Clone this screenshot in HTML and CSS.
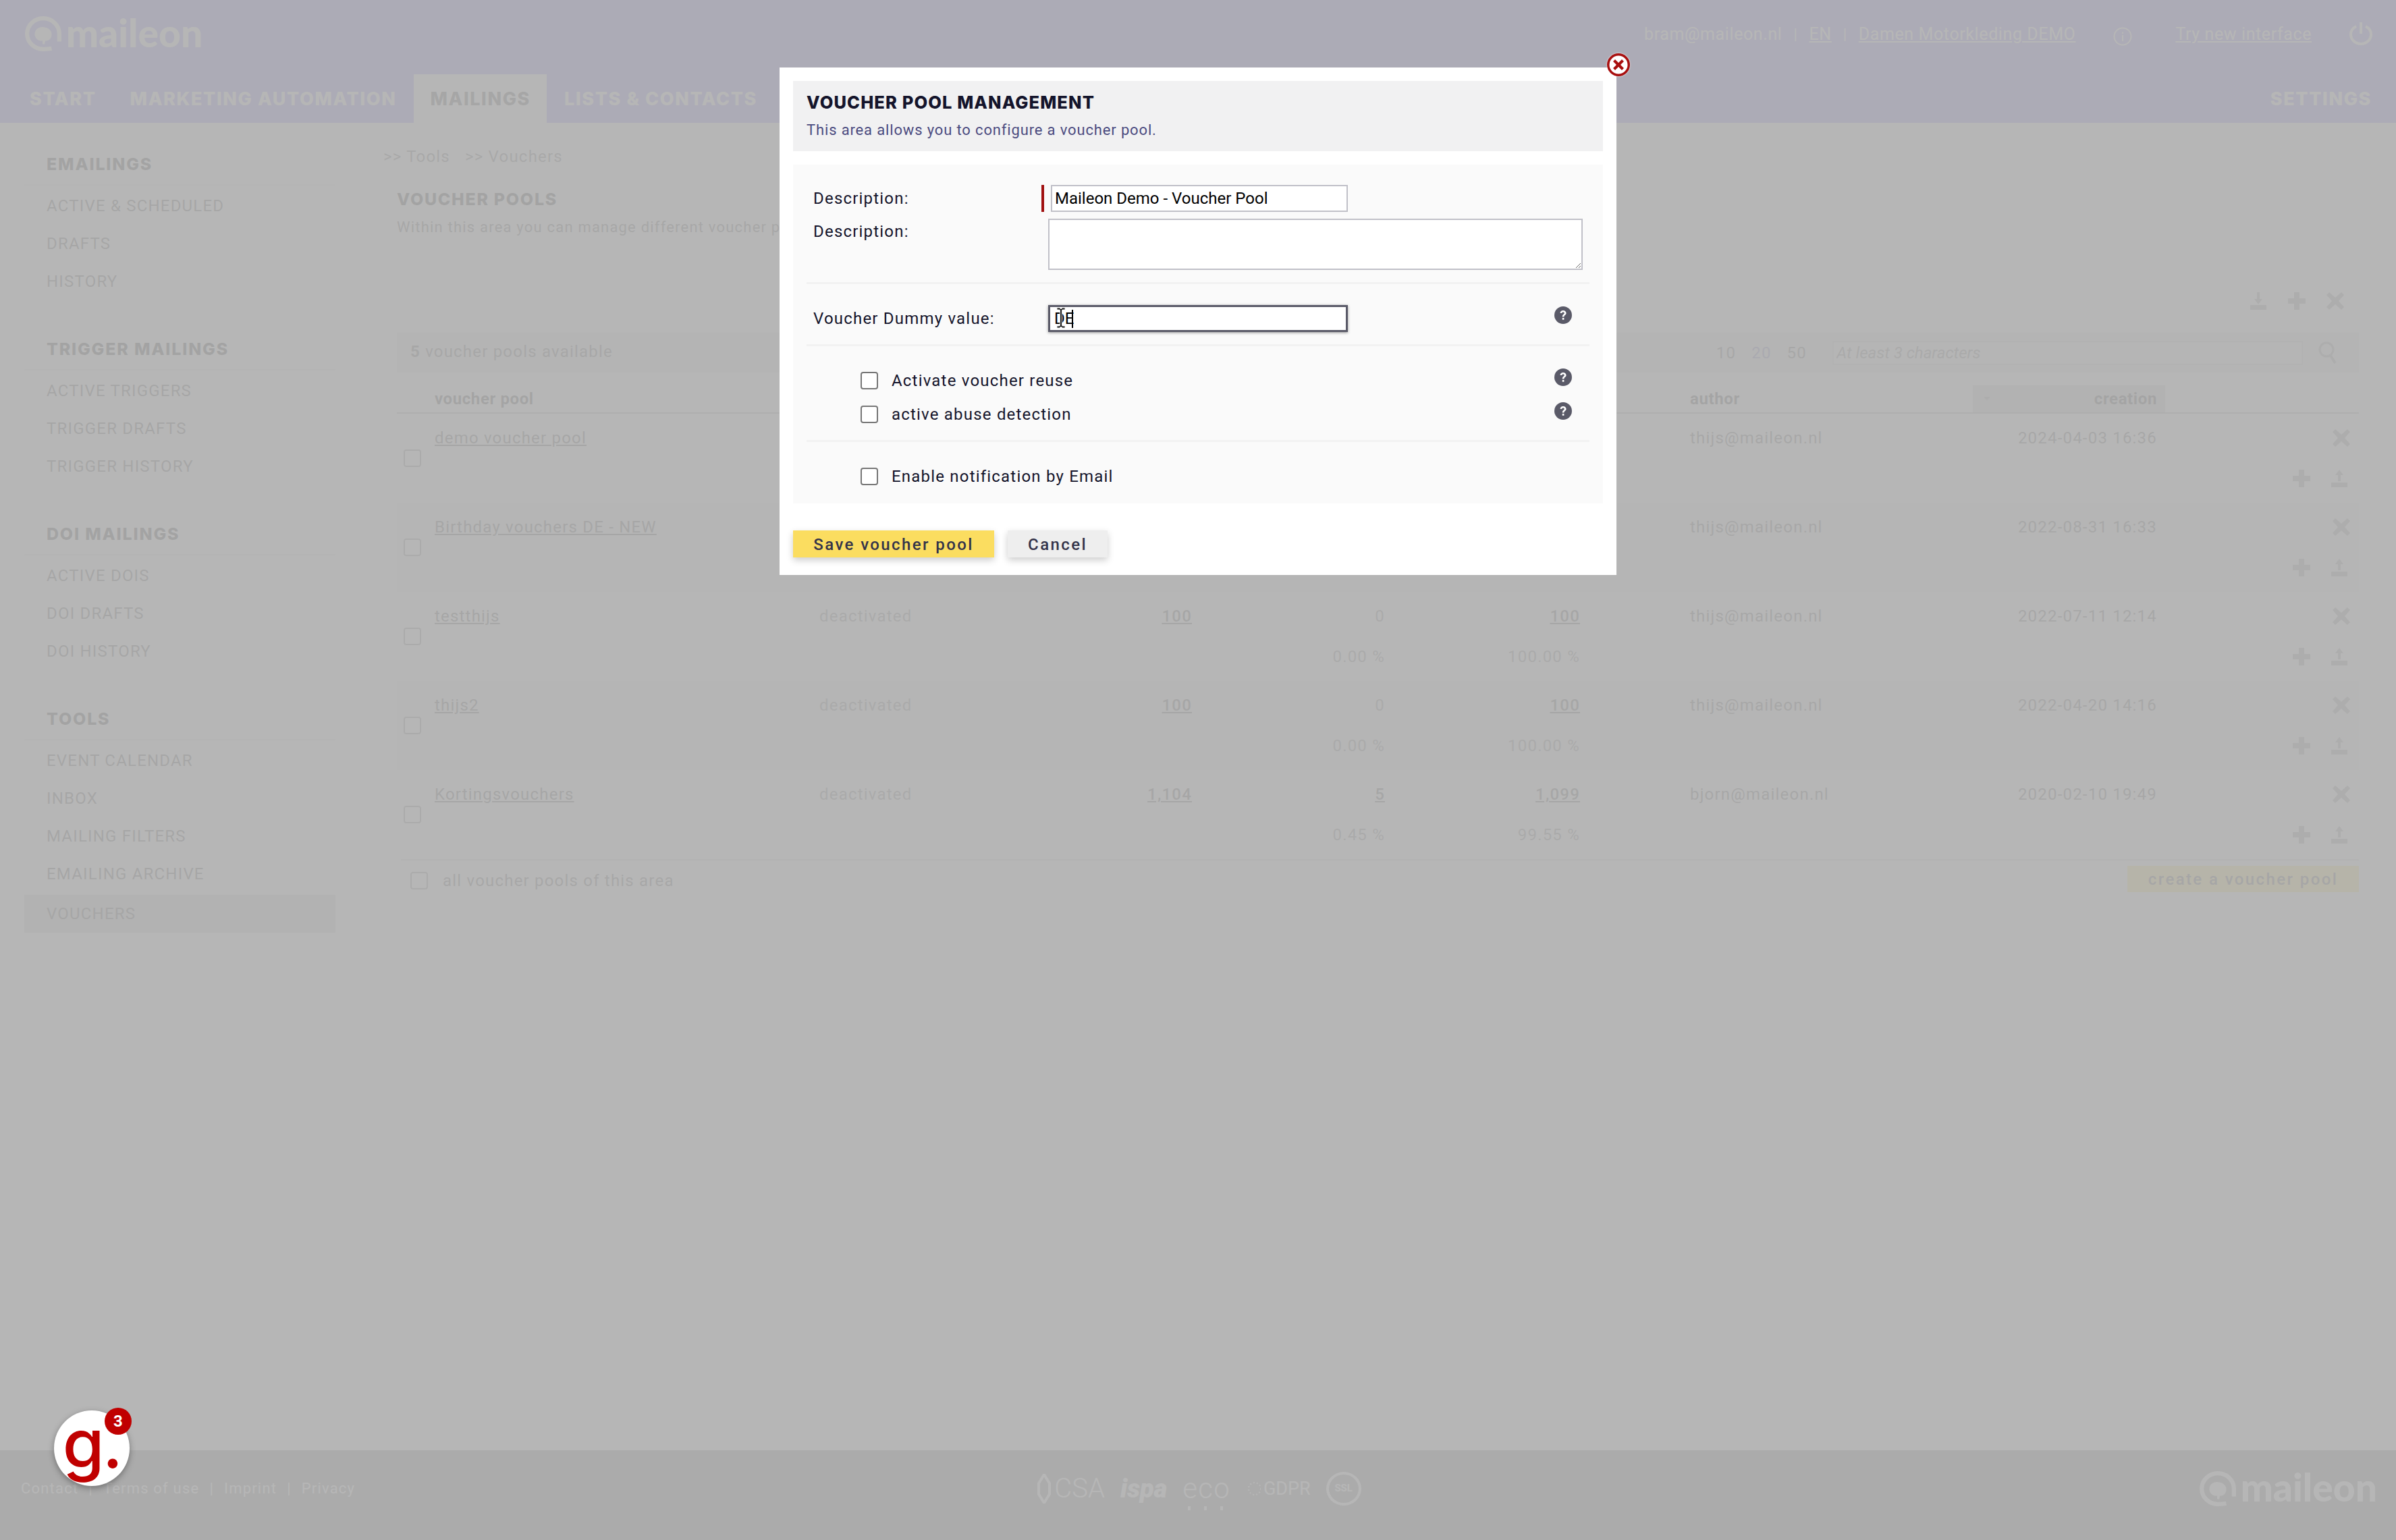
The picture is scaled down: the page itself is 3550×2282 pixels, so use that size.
FILE: index.html
```html
<!DOCTYPE html>
<html lang="en">
<head>
    <meta charset="UTF-8">
    <title>Maileon - Voucher pools</title>
    <link rel="stylesheet" href="styles.css">
</head>
<body>
    <svg class="defs" width="0" height="0">
        <symbol id="at" viewBox="0 0 54 50">
            <path d="M39 46 C34 47 31 47 27 47 C14 47 4 37 4 25 C4 13 14 3 27 3 C40 3 50 13 50 25 L50 36" fill="none" stroke="currentColor" stroke-width="6"/>
            <path d="M15 24 C16 17 24 14 30 16 C36 17 40 22 39 27 C39 33 33 36 30 35 L29 40 L26 40 L26 35 C20 36 14 31 15 24 Z" fill="currentColor"/>
        </symbol>
        <symbol id="ico-x" viewBox="0 0 28 28">
            <path d="M1 5 L5 1 L14 9 L23 1 L27 5 L19 14 L27 23 L23 27 L14 19 L5 27 L1 23 L9 14 Z" fill="currentColor"/>
        </symbol>
        <symbol id="ico-plus" viewBox="0 0 28 28">
            <path d="M10 1 H18 V10 H27 V18 H18 V27 H10 V18 H1 V10 H10 Z" fill="currentColor"/>
        </symbol>
        <symbol id="ico-up" viewBox="0 0 28 28">
            <path d="M14 1 L20 9 H16 V18 H12 V9 H8 Z" fill="currentColor"/>
            <rect x="2" y="20" width="24" height="7" fill="currentColor"/>
        </symbol>
        <symbol id="ico-down" viewBox="0 0 28 28">
            <path d="M14 19 L20 11 H16 V1 H12 V11 H8 Z" fill="currentColor"/>
            <rect x="2" y="20" width="24" height="7" fill="currentColor"/>
        </symbol>
        <symbol id="ico-help" viewBox="0 0 26 26">
            <circle cx="13" cy="13" r="13" fill="#5a5a68"/>
            <path d="M8.6 10 C8.6 7.2 10.8 6 13 6 C15.7 6 17.6 7.7 17.6 10 C17.6 12.8 14.4 12.8 14.4 15.6 H11.8 C11.8 11.6 14.8 11.8 14.8 10 C14.8 9 14 8.4 13 8.4 C12 8.4 11.2 9 11.1 10 Z" fill="#fff"/>
            <rect x="11.8" y="17" width="2.6" height="2.8" fill="#fff"/>
        </symbol>
    </svg>

    <header class="top">
        <div class="top-bar">
            <a class="logo"><svg class="logo-at"><use href="#at"/></svg><span>maileon</span></a>
            <div class="top-links">
                <span>bram@maileon.nl</span>
                <span class="sep">|</span>
                <a>EN</a>
                <span class="sep">|</span>
                <a>Damen Motorkleding DEMO</a>
                <svg class="ico-info" viewBox="0 0 28 28">
                    <circle cx="14" cy="14" r="12.5" fill="none" stroke="currentColor" stroke-width="2"/>
                    <rect x="13" y="12" width="2" height="9" fill="currentColor"/>
                    <rect x="13" y="7.5" width="2" height="2.5" fill="currentColor"/>
                </svg>
                <a class="try-new">Try new interface</a>
                <svg class="ico-power" viewBox="0 0 34 34">
                    <path d="M10 6 C4 9 2 14 2 18 C2 26 9 32 17 32 C25 32 32 26 32 18 C32 14 30 9 24 6" fill="none" stroke="currentColor" stroke-width="4"/>
                    <rect x="15" y="0" width="4" height="17" fill="currentColor"/>
                </svg>
            </div>
        </div>
        <nav class="main-nav">
            <a>START</a>
            <a>MARKETING AUTOMATION</a>
            <a class="active">MAILINGS</a>
            <a>LISTS &amp; CONTACTS</a>
            <a class="nav-right">SETTINGS</a>
        </nav>
    </header>

    <div class="layout">
        <aside class="sidebar">
            <section>
                <h3>EMAILINGS</h3>
                <ul>
                    <li>ACTIVE &amp; SCHEDULED</li>
                    <li>DRAFTS</li>
                    <li>HISTORY</li>
                </ul>
            </section>
            <section>
                <h3>TRIGGER MAILINGS</h3>
                <ul>
                    <li>ACTIVE TRIGGERS</li>
                    <li>TRIGGER DRAFTS</li>
                    <li>TRIGGER HISTORY</li>
                </ul>
            </section>
            <section>
                <h3>DOI MAILINGS</h3>
                <ul>
                    <li>ACTIVE DOIS</li>
                    <li>DOI DRAFTS</li>
                    <li>DOI HISTORY</li>
                </ul>
            </section>
            <section>
                <h3>TOOLS</h3>
                <ul>
                    <li>EVENT CALENDAR</li>
                    <li>INBOX</li>
                    <li>MAILING FILTERS</li>
                    <li>EMAILING ARCHIVE</li>
                    <li class="active">VOUCHERS</li>
                </ul>
            </section>
        </aside>

        <main class="content">
            <div class="crumbs"><span>&gt;&gt; Tools</span><span>&gt;&gt; Vouchers</span></div>
            <div class="intro">
                <h2>VOUCHER POOLS</h2>
                <p>Within this area you can manage different voucher pools.</p>
            </div>
            <div class="tool-icons">
                <svg class="ico"><use href="#ico-down"/></svg>
                <svg class="ico"><use href="#ico-plus"/></svg>
                <svg class="ico"><use href="#ico-x"/></svg>
            </div>

            <div class="pools">
                <div class="pools-bar">
                    <span class="pools-count"><b>5</b> voucher pools available</span>
                    <div class="pools-tools">
                        <span class="page-size">10</span>
                        <span class="page-size current">20</span>
                        <span class="page-size">50</span>
                        <input class="search" type="text" placeholder="At least 3 characters">
                        <svg class="ico-search" viewBox="0 0 28 34">
                            <circle cx="13" cy="12" r="10" fill="none" stroke="currentColor" stroke-width="3"/>
                            <path d="M19 21 L26 32" stroke="currentColor" stroke-width="4"/>
                        </svg>
                    </div>
                </div>

                <div class="pool-grid pool-head">
                    <span class="col-name">voucher pool</span>
                    <span class="col-author">author</span>
                    <span class="col-date sorted"><i class="sort-mark"></i>creation</span>
                </div>

                <div class="pool-grid pool-row">
                    <input class="check row-check" type="checkbox">
                    <a class="col-name">demo voucher pool</a>
                    <span class="col-author">thijs@maileon.nl</span>
                    <span class="col-date">2024-04-03 16:36</span>
                    <span class="row-x"><svg class="ico"><use href="#ico-x"/></svg></span>
                    <span class="row-actions"><svg class="ico"><use href="#ico-plus"/></svg><svg class="ico"><use href="#ico-up"/></svg></span>
                </div>
                <div class="pool-grid pool-row alt">
                    <input class="check row-check" type="checkbox">
                    <a class="col-name">Birthday vouchers DE - NEW</a>
                    <span class="col-author">thijs@maileon.nl</span>
                    <span class="col-date">2022-08-31 16:33</span>
                    <span class="row-x"><svg class="ico"><use href="#ico-x"/></svg></span>
                    <span class="row-actions"><svg class="ico"><use href="#ico-plus"/></svg><svg class="ico"><use href="#ico-up"/></svg></span>
                </div>
                <div class="pool-grid pool-row">
                    <input class="check row-check" type="checkbox">
                    <a class="col-name">testthijs</a>
                    <span class="col-status">deactivated</span>
                    <a class="num col-total">100</a>
                    <span class="num col-used">0</span>
                    <a class="num col-free">100</a>
                    <span class="col-author">thijs@maileon.nl</span>
                    <span class="col-date">2022-07-11 12:14</span>
                    <span class="row-x"><svg class="ico"><use href="#ico-x"/></svg></span>
                    <span class="pct col-used">0.00 %</span>
                    <span class="pct col-free">100.00 %</span>
                    <span class="row-actions"><svg class="ico"><use href="#ico-plus"/></svg><svg class="ico"><use href="#ico-up"/></svg></span>
                </div>
                <div class="pool-grid pool-row alt">
                    <input class="check row-check" type="checkbox">
                    <a class="col-name">thijs2</a>
                    <span class="col-status">deactivated</span>
                    <a class="num col-total">100</a>
                    <span class="num col-used">0</span>
                    <a class="num col-free">100</a>
                    <span class="col-author">thijs@maileon.nl</span>
                    <span class="col-date">2022-04-20 14:16</span>
                    <span class="row-x"><svg class="ico"><use href="#ico-x"/></svg></span>
                    <span class="pct col-used">0.00 %</span>
                    <span class="pct col-free">100.00 %</span>
                    <span class="row-actions"><svg class="ico"><use href="#ico-plus"/></svg><svg class="ico"><use href="#ico-up"/></svg></span>
                </div>
                <div class="pool-grid pool-row">
                    <input class="check row-check" type="checkbox">
                    <a class="col-name">Kortingsvouchers</a>
                    <span class="col-status">deactivated</span>
                    <a class="num col-total">1,104</a>
                    <a class="num col-used">5</a>
                    <a class="num col-free">1,099</a>
                    <span class="col-author">bjorn@maileon.nl</span>
                    <span class="col-date">2020-02-10 19:49</span>
                    <span class="row-x"><svg class="ico"><use href="#ico-x"/></svg></span>
                    <span class="pct col-used">0.45 %</span>
                    <span class="pct col-free">99.55 %</span>
                    <span class="row-actions"><svg class="ico"><use href="#ico-plus"/></svg><svg class="ico"><use href="#ico-up"/></svg></span>
                </div>

                <div class="pools-foot">
                    <label class="select-all"><input class="check" type="checkbox"> all voucher pools of this area</label>
                    <a class="btn-create">create a voucher pool</a>
                </div>
            </div>
        </main>
    </div>

    <footer class="foot">
        <div class="foot-links">
            <span>Contact</span><span>|</span><span>Terms of use</span><span>|</span><span>Imprint</span><span>|</span><span>Privacy</span>
        </div>
        <div class="foot-seals">
            <span class="seal-csa"><svg viewBox="0 0 20 44"><path d="M10 1 L18 14 V30 L10 43 L2 30 V14 Z" fill="none" stroke="currentColor" stroke-width="4"/></svg>CSA</span>
            <span class="seal-ispa">ispa</span>
            <span class="seal-eco">eco</span>
            <span class="seal-gdpr"><svg viewBox="0 0 20 44"><circle cx="12" cy="22" r="9" fill="none" stroke="currentColor" stroke-width="2" stroke-dasharray="2 3"/></svg>GDPR</span>
            <span class="seal-ssl">SSL</span>
        </div>
        <a class="logo foot-logo"><svg class="logo-at"><use href="#at"/></svg><span>maileon</span></a>
    </footer>

    <div class="overlay"></div>

    <div class="dialog">
        <svg class="dialog-close" viewBox="0 0 36 36">
            <circle cx="18" cy="18" r="17" fill="#a80f0f"/>
            <circle cx="18" cy="18" r="13.5" fill="#fff"/>
            <path d="M10 13 L13 10 L18 15 L23 10 L26 13 L21 18 L26 23 L23 26 L18 21 L13 26 L10 23 L15 18 Z" fill="#a80f0f"/>
        </svg>
        <div class="dialog-head">
            <h2>VOUCHER POOL MANAGEMENT</h2>
            <p>This area allows you to configure a voucher pool.</p>
        </div>
        <form class="dialog-form">
            <div class="form-section">
                <div class="form-row">
                    <label>Description:</label>
                    <span class="required"><input class="text-input" type="text" value="Maileon Demo - Voucher Pool"></span>
                </div>
                <div class="form-row row-text">
                    <label>Description:</label>
                    <textarea class="text-area"></textarea>
                </div>
            </div>
            <div class="form-section sec-dummy">
                <div class="form-row">
                    <label>Voucher Dummy value:</label>
                    <span class="focus-field">
                        <input class="text-input focused" type="text" value="DE">
                        <i class="caret"></i>
                        <svg class="ibeam" viewBox="0 0 14 32">
                            <path d="M1 1 H5 L7 3 L9 1 H13 V4 H9 L8.5 5 V27 L9 28 H13 V31 H9 L7 29 L5 31 H1 V28 H5 L5.5 27 V5 L5 4 H1 Z" fill="#222" stroke="#fff" stroke-width="0.8"/>
                        </svg>
                    </span>
                    <svg class="help"><use href="#ico-help"/></svg>
                </div>
            </div>
            <div class="form-section sec-checks">
                <div class="check-row">
                    <input class="check" type="checkbox"><label>Activate voucher reuse</label>
                    <svg class="help"><use href="#ico-help"/></svg>
                </div>
                <div class="check-row">
                    <input class="check" type="checkbox"><label>active abuse detection</label>
                    <svg class="help"><use href="#ico-help"/></svg>
                </div>
            </div>
            <div class="form-section sec-checks last">
                <div class="check-row">
                    <input class="check" type="checkbox"><label>Enable notification by Email</label>
                </div>
            </div>
        </form>
        <div class="dialog-buttons">
            <button class="btn btn-save" type="button">Save voucher pool</button>
            <button class="btn btn-cancel" type="button">Cancel</button>
        </div>
    </div>

    <div class="help-widget">
        <span class="help-g">g.</span>
        <span class="help-badge">3</span>
    </div>
</body>
</html>
```

FILE: styles.css
```css
* {
    box-sizing: border-box;
}
html, body {
    margin: 0;
    padding: 0;
}
body {
    position: relative;
    width: 3550px;
    height: 2282px;
    overflow: hidden;
    display: flex;
    flex-direction: column;
    background-color: #fff;
    color: #333;
    font-family: Roboto, 'Liberation Sans', sans-serif;
    font-size: 24px;
    letter-spacing: 1.2px;
}
.defs {
    position: absolute;
}
a {
    text-decoration: underline;
}

/* header */
.top {
    height: 182px;
    flex: none;
    background-color: #7e72fb;
    color: #fff;
}
.top-bar {
    height: 110px;
    display: flex;
    justify-content: space-between;
    padding: 24px 35px 0 36px;
}
.logo {
    display: flex;
    align-items: center;
    height: 52px;
    text-decoration: none;
    color: #fff;
    font-family: Lato, sans-serif;
    font-weight: 900;
    font-size: 57px;
    letter-spacing: 0;
}
.logo span {
    margin-top: -5px;
}
.logo-at {
    width: 56px;
    height: 52px;
    margin-right: 6px;
}
.top-links {
    display: flex;
    align-items: center;
    height: 52px;
    font-size: 25px;
    letter-spacing: 0.6px;
}
.top-links .sep {
    margin: 0 17px;
    font-size: 22px;
}
.ico-info {
    width: 28px;
    height: 28px;
    margin: 8px 64px 0 56px;
}
.try-new {
    margin-right: 56px;
}
.ico-power {
    width: 34px;
    height: 34px;
}
.main-nav {
    display: flex;
    height: 72px;
    gap: 2px;
    padding: 0 12px 0 20px;
    font-family: Inter, Lato, sans-serif;
    font-weight: 800;
    font-size: 27px;
    letter-spacing: 1.6px;
}
.main-nav a {
    display: flex;
    align-items: center;
    padding: 0 24px;
    text-decoration: none;
}
.main-nav a.active {
    background-color: #fff;
    color: #333;
}
.main-nav .nav-right {
    margin-left: auto;
}

/* sidebar */
.layout {
    display: flex;
    flex: 1;
}
.sidebar {
    width: 461px;
    margin: 41px 0 0 36px;
    flex: none;
}
.sidebar section {
    margin-bottom: 52px;
}
.sidebar h3 {
    margin: 0;
    height: 52px;
    padding: 0 0 10px 33px;
    line-height: 40px;
    border-bottom: 2px solid #ddd;
    font-family: Inter, Lato, sans-serif;
    font-weight: 800;
    font-size: 25px;
    letter-spacing: 1.8px;
    color: #111;
}
.sidebar ul {
    list-style: none;
    margin: 0;
    padding: 2px 0 0;
}
.sidebar li {
    height: 56px;
    line-height: 56px;
    padding-left: 33px;
    color: #333;
}
.sidebar li.active {
    margin-top: 3px;
    background-color: #c4c4c4;
}

/* main part */
.content {
    flex: 1;
    margin: 30px 55px 0 71px;
}
.crumbs {
    display: flex;
    gap: 22px;
    height: 40px;
    line-height: 40px;
    color: #555;
}
.intro {
    height: 102px;
    margin-top: 11px;
    padding: 12px 0 0 20px;
    background-color: #f8f8f8;
}
.intro h2 {
    margin: 0;
    line-height: 40px;
    font-family: Inter, Lato, sans-serif;
    font-weight: 800;
    font-size: 25px;
    letter-spacing: 1.7px;
    color: #111;
}
.intro p {
    margin: 5px 0 0;
    line-height: 34px;
    font-size: 22px;
    color: #444;
}
.tool-icons {
    display: flex;
    justify-content: flex-end;
    gap: 29px;
    height: 30px;
    margin: 67px 21px 0 0;
    color: #8a8a8a;
}
.ico {
    width: 28px;
    height: 28px;
}
.pools {
    margin: 31px 0 0 20px;
}
.pools-bar {
    display: flex;
    justify-content: space-between;
    align-items: center;
    height: 59px;
    padding: 0 33px 0 20px;
    background-color: #e0e0e0;
    color: #444;
}
.pools-count {
    margin-bottom: 4px;
}
.pools-tools {
    display: flex;
    align-items: center;
}
.page-size {
    margin-right: 23px;
    color: #444;
}
.page-size.current {
    color: #6464b4;
}
.search {
    width: 697px;
    height: 36px;
    margin-left: 15px;
    padding: 0 4px;
    border: 2px solid #ccc;
    background-color: #eee;
    font-family: Roboto, sans-serif;
    font-size: 24px;
}
.search::placeholder {
    font-style: italic;
    color: #666;
}
.ico-search {
    width: 28px;
    height: 34px;
    margin-left: 22px;
    color: #8a8a8a;
}
.pool-grid {
    display: grid;
    grid-template-columns: 56px 570px 252px 300px 286px 289px 163px 446px 246px 299px;
}
.pool-head {
    height: 42px;
    margin-top: 19px;
    border-bottom: 2px solid #999;
    line-height: 40px;
    font-weight: 700;
    color: #222;
    letter-spacing: 0.6px;
}
.col-name {
    grid-column: 2;
}
.col-author {
    grid-column: 8;
}
.pool-head > span {
    grid-row: 1;
}
.pool-head .sorted {
    position: relative;
    grid-column: 9;
    margin: 0 -12px 0 -27px;
    padding-right: 12px;
    text-align: right;
    background-color: #c9c9c9;
}
.sort-mark {
    position: absolute;
    left: 16px;
    top: 17px;
    border: 5px solid transparent;
    border-top-color: #888;
}
.pool-row {
    height: 132px;
    grid-template-rows: 60px 60px;
    padding: 6px 0;
    line-height: 60px;
    color: #444;
}
.pool-row.alt {
    background-color: #eaeaea;
}
.pool-row .row-check {
    grid-column: 1;
    grid-row: 1 / 3;
    align-self: center;
    justify-self: start;
    margin-left: 10px;
}
.pool-row .col-name {
    grid-row: 1;
    color: #333;
}
.col-status {
    grid-column: 3;
    grid-row: 1;
    color: #666;
}
.col-total {
    grid-column: 4;
}
.col-used {
    grid-column: 5;
}
.col-free {
    grid-column: 6;
}
.num {
    grid-row: 1;
    justify-self: end;
    color: #666;
}
a.num {
    color: #333;
    font-weight: 500;
}
.pool-row .col-author {
    grid-row: 1;
}
.pool-row .col-date {
    grid-column: 9;
    grid-row: 1;
    text-align: right;
}
.row-x {
    grid-column: 10;
    grid-row: 1;
    display: flex;
    justify-content: flex-end;
    align-items: center;
    padding-right: 12px;
    color: #8a8a8a;
}
.row-actions {
    grid-column: 10;
    grid-row: 2;
    display: flex;
    justify-content: flex-end;
    align-items: center;
    gap: 28px;
    padding-right: 15px;
    color: #8a8a8a;
}
.pct {
    grid-row: 2;
    text-align: right;
    color: #666;
}
.pools-foot {
    display: flex;
    justify-content: space-between;
    align-items: flex-start;
    margin-left: 6px;
    padding-top: 8px;
    border-top: 2px solid #ccc;
}
.select-all {
    display: flex;
    align-items: center;
    gap: 22px;
    margin: 9px 0 0 14px;
    color: #444;
    line-height: 26px;
}
.btn-create {
    height: 39px;
    width: 343px;
    padding-top: 2px;
    line-height: 37px;
    text-align: center;
    text-decoration: none;
    background-color: #fddc5c;
    color: #333;
    font-weight: 500;
    letter-spacing: 2.4px;
}

/* footer */
.foot {
    flex: none;
    display: grid;
    grid-template-columns: 1fr auto 1fr;
    align-items: center;
    height: 133px;
    padding: 0 28px 20px 31px;
    background-color: #727272;
    color: #fff;
}
.foot-links {
    display: flex;
    gap: 15px;
    font-size: 22px;
}
.foot-seals {
    display: flex;
    align-items: center;
    gap: 23px;
}
.foot-seals svg {
    width: 22px;
    height: 44px;
}
.seal-csa, .seal-gdpr {
    display: flex;
    align-items: center;
    gap: 4px;
}
.seal-csa {
    font-size: 40px;
    font-weight: 300;
    letter-spacing: 0;
}
.seal-ispa {
    font-size: 38px;
    font-weight: 900;
    font-style: italic;
    letter-spacing: 0;
}
.seal-eco {
    position: relative;
    font-size: 42px;
    font-weight: 300;
}
.seal-eco::after {
    content: "";
    position: absolute;
    left: 8px;
    bottom: -8px;
    width: 4px;
    height: 6px;
    background-color: #fff;
    box-shadow: 24px 0 #fff, 48px 0 #fff;
}
.seal-gdpr {
    font-size: 27px;
    letter-spacing: 0;
}
.seal-ssl {
    width: 52px;
    height: 50px;
    line-height: 40px;
    border: 4px solid #fff;
    border-radius: 50%;
    text-align: center;
    font-size: 15px;
    letter-spacing: 0;
    font-weight: 700;
}
.foot-logo {
    justify-self: end;
}

/* overlay and dialog */
.overlay {
    position: absolute;
    inset: 0;
    background-color: rgba(176, 176, 176, 0.92);
}
.dialog {
    position: absolute;
    left: 1155px;
    top: 100px;
    width: 1240px;
    height: 752px;
    padding: 20px;
    background-color: #fff;
    color: #14142b;
}
.dialog-close {
    position: absolute;
    right: -21px;
    top: -22px;
    width: 36px;
    height: 36px;
    filter: drop-shadow(0 0 1px #fff);
}
.dialog-head {
    height: 104px;
    padding: 15px 20px 0;
    background-color: #f1f1f2;
}
.dialog-head h2 {
    margin: 0;
    line-height: 34px;
    font-family: Inter, Lato, sans-serif;
    font-weight: 800;
    font-size: 25.5px;
    letter-spacing: 1.1px;
    color: #14142b;
}
.dialog-head p {
    margin: 7px 0 0;
    line-height: 34px;
    font-size: 22px;
    letter-spacing: 0.85px;
    color: #4b4b80;
}
.dialog-form {
    height: 502px;
    margin-top: 20px;
    padding: 0 20px;
    background-color: #fafafa;
}
.form-section {
    padding: 30px 0 18px 10px;
    border-bottom: 3px solid #f2f2f2;
}
.sec-dummy {
    padding-top: 31px;
}
.sec-checks {
    padding: 26px 0 13px 80px;
}
.sec-checks.last {
    border-bottom: 0;
}
.form-row {
    display: flex;
    align-items: center;
}
.form-row label {
    width: 348px;
    flex: none;
}
.row-text {
    align-items: flex-start;
    margin-top: 10px;
}
.row-text label {
    padding-top: 5px;
}
.required {
    display: block;
    margin-left: -10px;
    padding-left: 10px;
    border-left: 4px solid #a01010;
    height: 40px;
}
.text-input {
    display: block;
    width: 440px;
    height: 40px;
    padding: 0 4px;
    border: 2px solid #c0c0c8;
    border-radius: 0;
    outline: none;
    background-color: #fff;
    color: #000;
    font-family: Roboto, sans-serif;
    font-size: 24px;
    letter-spacing: 0;
}
.text-area {
    display: block;
    width: 792px;
    height: 76px;
    border: 2px solid #c0c0c8;
    border-radius: 0;
    background-color: #fff;
}
.focus-field {
    position: relative;
    display: block;
    width: 444px;
    height: 40px;
}
.text-input.focused {
    width: 444px;
    padding: 0 6px;
    border: 3px solid #5a5a68;
    box-shadow: 0 1px 4px rgba(0, 0, 0, 0.4);
}
.caret {
    position: absolute;
    left: 35px;
    top: 7px;
    width: 2px;
    height: 27px;
    background-color: #000;
}
.ibeam {
    position: absolute;
    left: 12px;
    top: 3px;
    width: 14px;
    height: 32px;
}
.help {
    width: 26px;
    height: 26px;
    margin: -10px 26px 0 auto;
    flex: none;
}
.check-row {
    display: flex;
    align-items: center;
    gap: 20px;
    height: 50px;
}
.check {
    appearance: none;
    width: 26px;
    height: 26px;
    margin: 0;
    flex: none;
    border: 2px solid #767676;
    border-radius: 4px;
    background-color: #fff;
}
.dialog-buttons {
    display: flex;
    gap: 20px;
    margin-top: 40px;
}
.btn {
    height: 40px;
    padding: 2px 0 0;
    border: 0;
    font-family: Roboto, sans-serif;
    font-size: 24px;
    font-weight: 500;
    letter-spacing: 2.4px;
    color: #33334a;
    box-shadow: 0 4px 10px rgba(0, 0, 0, 0.2);
}
.btn-save {
    width: 298px;
    background-color: #fbdd60;
}
.btn-cancel {
    width: 148px;
    background-color: #eee;
}

/* help widget */
.help-widget {
    position: absolute;
    left: 80px;
    top: 2090px;
    width: 112px;
    height: 112px;
    border-radius: 50%;
    background-color: #fff;
    box-shadow: 0 3px 10px rgba(0, 0, 0, 0.35);
    text-align: center;
}
.help-g {
    display: block;
    line-height: 98px;
    font-family: Inter, Roboto, sans-serif;
    font-size: 100px;
    font-weight: 500;
    letter-spacing: -3px;
    color: #c00000;
}
.help-badge {
    position: absolute;
    left: 75px;
    top: -4px;
    width: 40px;
    height: 40px;
    line-height: 40px;
    border-radius: 50%;
    background-color: #c00000;
    color: #fff;
    font-size: 24px;
    font-weight: 700;
    letter-spacing: 0;
}
```
